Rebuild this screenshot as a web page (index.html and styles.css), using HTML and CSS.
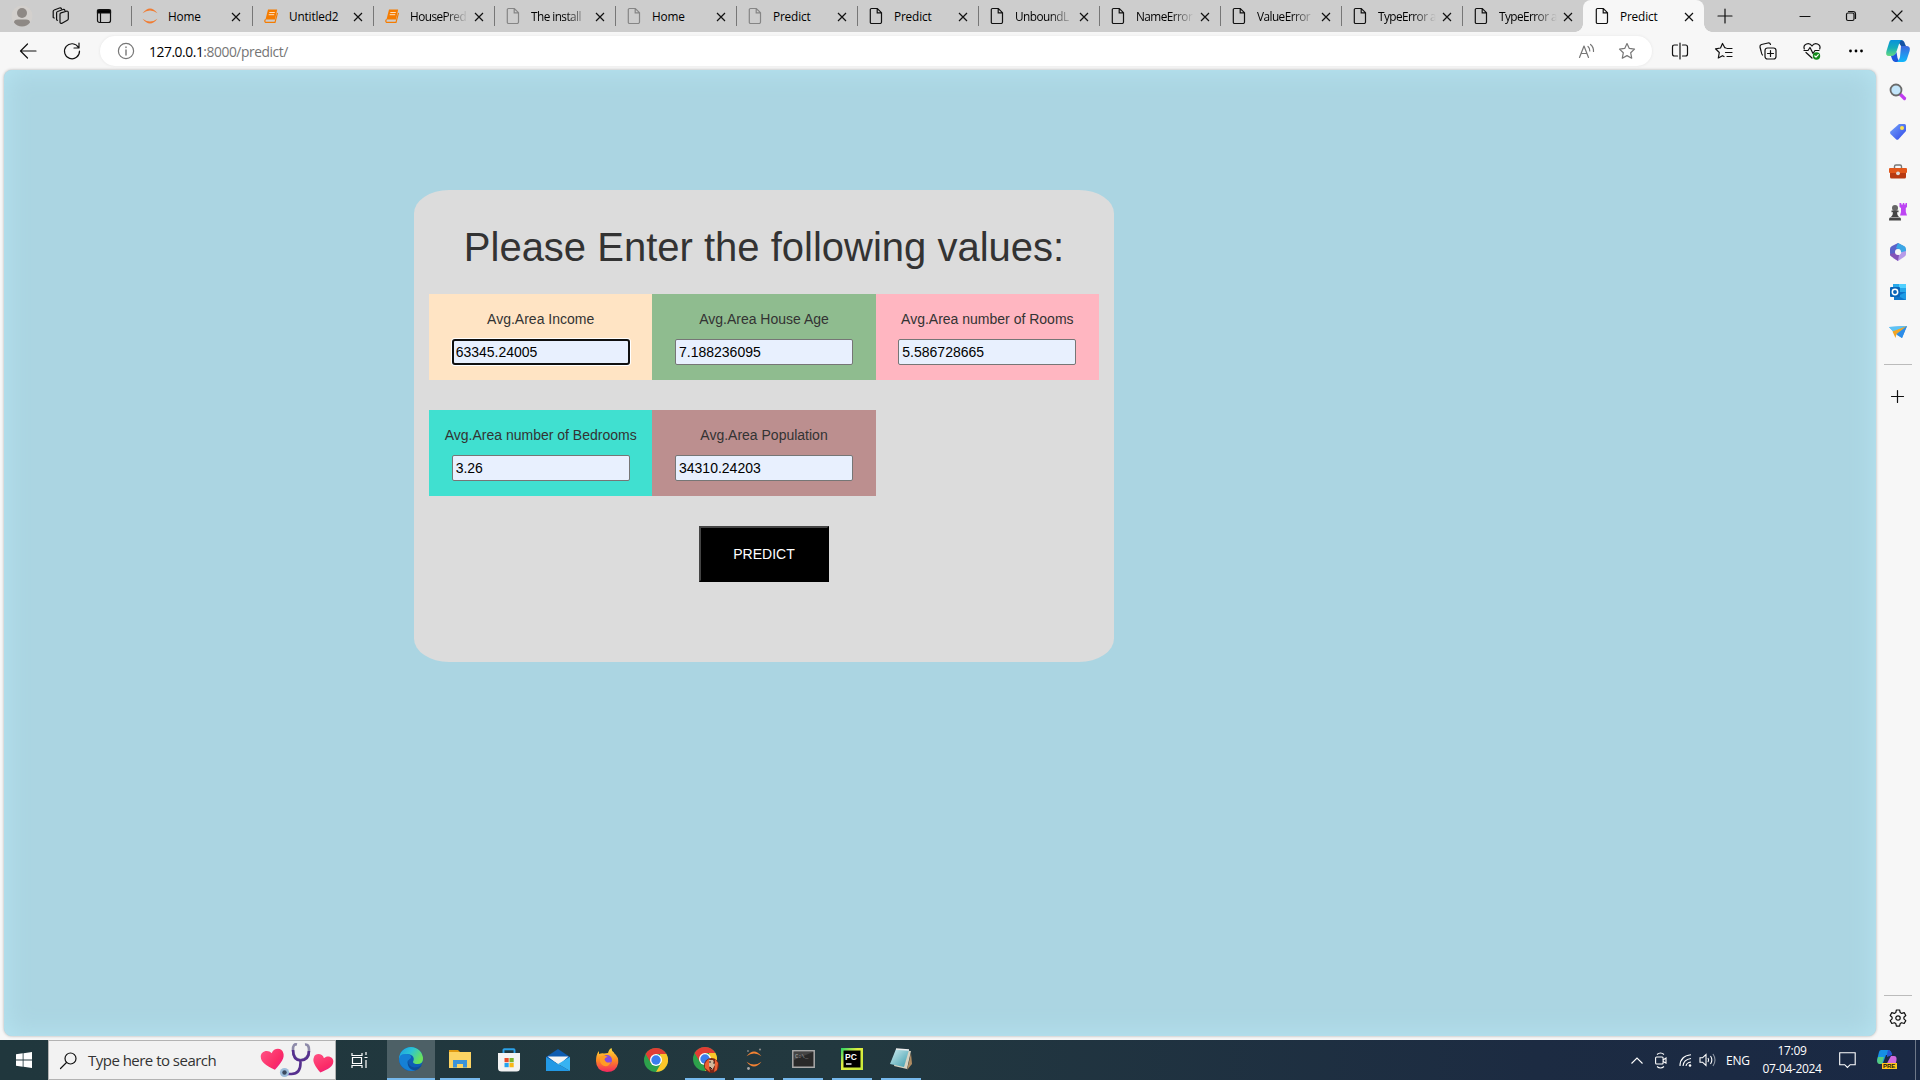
FILE: index.html
```html
<!DOCTYPE html>
<html lang="en">
<head>
<meta charset="utf-8">
<title>Predict</title>
<link rel="stylesheet" href="styles.css">
</head>
<body>
<svg class="defs" width="0" height="0" aria-hidden="true">
  <defs>
    <symbol id="doc" viewBox="0 0 14 18"><path d="M2.5 1.5h5.800l4.200 4.200v9.300a1.500 1.500 0 0 1-1.500 1.500H2.500A1.200 1.200 0 0 1 1.300 15.300V2.700A1.200 1.200 0 0 1 2.500 1.500zM8.200 1.500V5.800h4.300"/></symbol>
    <symbol id="x" viewBox="0 0 10 10"><path d="M1 1l8 8M9 1L1 9"/></symbol>
    <symbol id="book" viewBox="0 0 14 14"><path d="M4 .5h9.200L11 10.500H1.500z" fill="#f57c00"/><path d="M1.600 10.300Q0 12 1.500 13.300H11l2.500-9.500" fill="none" stroke="#f57c00" stroke-width="1.200"/><path d="M5.300 3.500h5.500M4.700 5.700h5.500" stroke="#ffe0c0" stroke-width="1"/></symbol>
    <symbol id="jup" viewBox="0 0 16 18"><path d="M.5 6.200Q8-3.400 15.500 6.200Q8 .600.5 6.200zM.5 11.800Q8 21.400 15.500 11.800Q8 17.400.5 11.800z"/></symbol>
    <symbol id="chrome" viewBox="0 0 24 24"><circle cx="12" cy="12" r="12" fill="#2da14b"/><path d="M1.600 6A12 12 0 0 1 22.400 6H12L7 15z" fill="#e13d34"/><path d="M22.400 6A12 12 0 0 1 12 24l5.200-9L16 6z" fill="#fcc629"/><circle cx="12" cy="12" r="6" fill="#fff"/><circle cx="12" cy="12" r="4.700" fill="#3b7ded"/></symbol>
    <symbol id="heart" viewBox="0 0 24 22"><path d="M12 21C4 15 0 11 .5 6 1 0 9-1 12 4 15-1 23 0 23.500 6 24 11 20 15 12 21z"/></symbol>
    <linearGradient id="gp" x1="0" y1="0" x2="1" y2="1"><stop offset="0" stop-color="#ff5285"/><stop offset=".6" stop-color="#fb2d67"/><stop offset="1" stop-color="#e9168c"/></linearGradient>
    <linearGradient id="gc1" x1="0" y1="0" x2="0" y2="1"><stop offset="0" stop-color="#0792dc"/><stop offset=".5" stop-color="#16aeb9"/><stop offset="1" stop-color="#66da80"/></linearGradient>
    <linearGradient id="gc2" x1="0" y1="0" x2="0" y2="1"><stop offset="0" stop-color="#3c67dd"/><stop offset="1" stop-color="#10b8fb"/></linearGradient>
    <linearGradient id="ge" x1="0" y1="0" x2="1" y2=".5"><stop offset="0" stop-color="#1b9de2"/><stop offset=".5" stop-color="#2cc3d5"/><stop offset="1" stop-color="#6be25b"/></linearGradient>
    <linearGradient id="gt" x1="0" y1="0" x2="1" y2="1"><stop offset="0" stop-color="#76a5fb"/><stop offset="1" stop-color="#3047e8"/></linearGradient>
    <linearGradient id="gf" x1="0" y1="0" x2="0" y2="1"><stop offset="0" stop-color="#ffdc3e"/><stop offset=".5" stop-color="#ff8b22"/><stop offset="1" stop-color="#f3265f"/></linearGradient>
    <linearGradient id="gy" x1="0" y1="0" x2="1" y2="1"><stop offset="0" stop-color="#25d366"/><stop offset=".4" stop-color="#e1ef40"/><stop offset="1" stop-color="#c5e838"/></linearGradient>
    <linearGradient id="gn" x1="0" y1="0" x2="1" y2="1"><stop offset="0" stop-color="#d0eef2"/><stop offset="1" stop-color="#3d9bab"/></linearGradient>
  </defs>
</svg>

<header class="tabbar">
  <div class="tabtools">
    <svg class="avatar" width="22" height="22" viewBox="0 0 22 22"><circle cx="11" cy="11" r="10.500" fill="#d3d0cd"/><circle cx="11" cy="8" r="5" fill="#8e8985"/><path d="M3 17.500q0-3 4-3h8q4 0 4 3Q16 21.500 11 21.500T3 17.500z" fill="#8e8985"/></svg>
    <svg class="line workspaces" width="18" height="18" viewBox="0 0 18 18"><path d="M8 7.200q0-1 1-1.300L14.500 4.200q1.800-.300 1.800 1.300v6.300q0 1-1 1.400L10 16.300q-1.700.4-2-1zM5.500 13.300 4.600 13V5.800q0-1 1-1.300L11 2.500q1.500-.300 2 1M2.200 11 1.200 10.500V4.300q0-1 1-1.300L7.500 1q1.500-.300 2 .8"/></svg>
    <svg class="line" width="16" height="16" viewBox="0 0 16 16"><rect x="1.500" y="1.500" width="13" height="13" rx="2"/><path d="M1.500 2h13v3h-13z" fill="#000"/><path d="M4.500 5v9.500"/></svg>
  </div>
  <nav class="tabs">
    <div class="tab"><svg class="fav jup" width="16" height="18"><use href="#jup"/></svg><span>Home</span><svg class="close"><use href="#x"/></svg></div>
    <div class="tab"><svg class="fav" width="14" height="14"><use href="#book"/></svg><span>Untitled2</span><svg class="close"><use href="#x"/></svg></div>
    <div class="tab"><svg class="fav" width="14" height="14"><use href="#book"/></svg><span class="fade">HousePred</span><svg class="close"><use href="#x"/></svg></div>
    <div class="tab"><svg class="fav doc dim"><use href="#doc"/></svg><span class="fade">The install</span><svg class="close"><use href="#x"/></svg></div>
    <div class="tab"><svg class="fav doc dim"><use href="#doc"/></svg><span>Home</span><svg class="close"><use href="#x"/></svg></div>
    <div class="tab"><svg class="fav doc dim"><use href="#doc"/></svg><span>Predict</span><svg class="close"><use href="#x"/></svg></div>
    <div class="tab"><svg class="fav doc"><use href="#doc"/></svg><span>Predict</span><svg class="close"><use href="#x"/></svg></div>
    <div class="tab"><svg class="fav doc"><use href="#doc"/></svg><span class="fade">UnboundL</span><svg class="close"><use href="#x"/></svg></div>
    <div class="tab"><svg class="fav doc"><use href="#doc"/></svg><span class="fade">NameError</span><svg class="close"><use href="#x"/></svg></div>
    <div class="tab"><svg class="fav doc"><use href="#doc"/></svg><span class="fade">ValueError</span><svg class="close"><use href="#x"/></svg></div>
    <div class="tab"><svg class="fav doc"><use href="#doc"/></svg><span class="fade">TypeError a</span><svg class="close"><use href="#x"/></svg></div>
    <div class="tab"><svg class="fav doc"><use href="#doc"/></svg><span class="fade">TypeError a</span><svg class="close"><use href="#x"/></svg></div>
    <div class="tab active"><svg class="fav doc"><use href="#doc"/></svg><span>Predict</span><svg class="close"><use href="#x"/></svg></div>
  </nav>
  <svg class="line newtab" width="14" height="14" viewBox="0 0 14 14"><path d="M7 0v14M0 7h14"/></svg>
  <div class="winctl">
    <svg class="line" width="12" height="12" viewBox="0 0 12 12"><path d="M1 6.500h10"/></svg>
    <svg class="line" width="12" height="12" viewBox="0 0 12 12"><rect x="1.500" y="3" width="7.500" height="7.500" rx="1.500"/><path d="M3.500 1.500h4.500q2.500 0 2.500 2.500v4.500"/></svg>
    <svg class="line" width="12" height="12" viewBox="0 0 12 12"><path d="M1 1l10 10M11 1L1 11"/></svg>
  </div>
</header>

<div class="toolbar">
  <div class="navbtns">
    <svg class="line" width="18" height="16" viewBox="0 0 18 16"><path d="M17 8H1.500M8.500 1 1.500 8l7 7"/></svg>
    <svg class="line" width="18" height="18" viewBox="0 0 18 18"><path d="M15.500 5.500A7.500 7.500 0 1 0 16.500 9M16 1v5h-5"/></svg>
  </div>
  <div class="address">
    <svg class="line gray" width="18" height="18" viewBox="0 0 18 18"><circle cx="9" cy="9" r="7.600"/><path d="M9 8v5M9 5v.5" stroke-width="1.400"/></svg>
    <p class="url"><b>127.0.0.1</b>:8000/predict/</p>
    <svg class="line gray" width="18" height="16" viewBox="0 0 18 16"><path d="M1.500 14.500 6 3l4.500 11.500M3.200 10.500h5.600M10 3.500q2 1.800 1.800 4.500M12.500 1.500q3.300 2.700 3 7"/></svg>
    <svg class="line gray" width="18" height="18" viewBox="0 0 18 18"><path d="M9 1.500l2.300 4.900 5.200.700-3.800 3.700 1 5.400L9 13.600l-4.700 2.600 1-5.400L1.500 7.100l5.200-.700z"/></svg>
  </div>
  <div class="actions">
    <svg class="line" width="18" height="18" viewBox="0 0 18 18"><path d="M9 1v16M6.500 3H3.500Q1.500 3 1.500 5v7q0 2 2 2h3M11.500 3h3q2 0 2 2v7q0 2-2 2h-3"/></svg>
    <svg class="line" width="18" height="18" viewBox="0 0 18 18"><path d="M11 6 9.800 5.700 7.500 1.500 5.500 6l-5 .8 3.800 3.700-1 5.500 4.200-2.300 1.500.8M12 6.500h5M10.500 10.500H17M12 14.500h5"/></svg>
    <svg class="line" width="18" height="18" viewBox="0 0 18 18"><rect x="6" y="6" width="11" height="11" rx="2.500"/><path d="M11.500 8.500v6M8.500 11.500h6M3.500 13Q2.700 12.500 2 9L1 5q-.300-2 1.500-2.500L9 1q2-.300 2.500 1.500"/></svg>
    <svg class="line" width="18" height="18" viewBox="0 0 18 18"><path d="M9 16 3 10.500M1.300 7Q0 3.500 3.500 2 7 .800 9 4q2-3.200 5.500-2 3.500 1.500 2.200 5M1 8.500h4l2-3 3 6 2-3h4"/><circle cx="13.500" cy="14" r="3.700" fill="#128a1b" stroke="none"/><path d="M11.800 14l1.200 1.200 2.300-2.500" stroke="#fff"/></svg>
    <svg width="18" height="18" viewBox="0 0 18 18"><circle cx="3.500" cy="9" r="1.400"/><circle cx="9" cy="9" r="1.400"/><circle cx="14.500" cy="9" r="1.400"/></svg>
  </div>
  <svg class="copilot" width="24" height="24" viewBox="0 0 24 24"><path d="M11 1h4q3 0 4 4l1 2h-5z" fill="#1453a4"/><path d="M5 1h11q-2 .500-3 4L10 14q-1 3-4 3H3Q-1 17 .5 12L3 4Q3.700 1 5 1z" fill="url(#gc1)"/><path d="M5 17q4 0 5.500-4l1 6 2 4H9Q7 23 6 20z" fill="#2057db"/><path d="M15 7h5q5 0 3.600 5L21 20q-1 3-4 3h-6q2-1 3-5z" fill="url(#gc2)"/></svg>
</div>

<div class="workspace">
  <main class="page">
    <section class="card">
      <h1>Please Enter the following values:</h1>
      <form class="fields">
        <label class="field income">Avg.Area Income<input class="focused" type="text" value="63345.24005"></label>
        <label class="field age">Avg.Area House Age<input type="text" value="7.188236095"></label>
        <label class="field rooms">Avg.Area number of Rooms<input type="text" value="5.586728665"></label>
        <label class="field bedrooms">Avg.Area number of Bedrooms<input type="text" value="3.26"></label>
        <label class="field population">Avg.Area Population<input type="text" value="34310.24203"></label>
        <button class="predict" type="button">PREDICT</button>
      </form>
    </section>
  </main>
  <aside class="sidebar">
    <svg width="18" height="18" viewBox="0 0 18 18"><path d="M11.500 11.500l4 4" stroke="#c03bf0" stroke-width="3.200" stroke-linecap="round"/><circle cx="7" cy="7" r="5.500" fill="#c3e6fb" stroke="#6b6b6b" stroke-width="1.800"/></svg>
    <svg width="18" height="18" viewBox="0 0 18 18"><path d="M10 1h5.500Q17 1 17 2.500V8L9.500 16.300q-1.200 1-2.500 0L1.500 11q-1-1.200 0-2.400z" fill="url(#gt)"/><circle cx="13" cy="5" r="2" fill="#ffe14e"/></svg>
    <svg width="18" height="18" viewBox="0 0 18 18"><path d="M5.500 5V3.500Q5.500 2 7 2h4q1.500 0 1.500 1.500V5" fill="none" stroke="#777" stroke-width="1.400"/><rect x="0" y="5" width="18" height="5" rx="1" fill="#e2571b"/><path d="M1 10h16v4q0 1.500-1.500 1.500h-13Q1 15.500 1 14z" fill="#b83a12"/><circle cx="9" cy="10.300" r="1.900" fill="#ddd"/></svg>
    <svg width="18" height="18" viewBox="0 0 18 18"><path d="M10.500 0h1.800v1.500h1.500V0h1.500v1.500h1.200V0H18v4l-1.200 1v4l1.200 3.500h-7L12 9V5l-1.500-1z" fill="#bd45f3"/><circle cx="6" cy="5" r="3" fill="#666"/><path d="M2.500 7.500h7v1.700H8q0 3 2 4.800H2q2-1.800 2-4.800H2.500zM1 14.500h10q1 0 1 3H0q0-3 1-3z" fill="#444"/></svg>
    <svg width="18" height="18" viewBox="0 0 18 18"><path d="M9 0l7 4v5l-5-3-4 1v4l-5 2Q1 12 1 10V6q0-2 2-3z" fill="#5b62c9"/><path d="M9 0l6 3q2 1 2 3v5l-6-2V7L7 5z" fill="#3ba6e5"/><path d="M17 8v3q0 2-2 3l-6 4-5-3 6-3 3-3z" fill="#b69be8"/><path d="M1 11l5-1 4 2-1 6-6-4q-2-1-2-3z" fill="#8452b8"/><circle cx="9" cy="9" r="3" fill="#f7f7f7"/></svg>
    <svg width="18" height="18" viewBox="0 0 18 18"><path d="M4 1h13v8H4z" fill="#28a8ea"/><path d="M10 1h7v4h-7z" fill="#50d0ff"/><path d="M5 9h12v8H5z" fill="#0f75c9"/><path d="M17 9v8l-8-4z" fill="#1e9be5"/><rect x="1" y="4" width="10" height="10" rx="1" fill="#0864b8"/><circle cx="6" cy="9" r="2.700" fill="none" stroke="#fff" stroke-width="1.500"/></svg>
    <svg width="18" height="18" viewBox="0 0 18 18"><path d="M0 4l18-1-5 12-5-3z" fill="#3399ea"/><path d="M0 4l18-1L4.500 9z" fill="#5dc3f5"/><path d="M3.500 8.500 18 3 7.500 11l-1 4z" fill="#f3a524"/><path d="M18 3 8 11.500 13 15z" fill="#2d8ce8"/></svg>
    <hr>
    <svg class="line plus" width="13" height="13" viewBox="0 0 13 13"><path d="M6.500 .5v12M.5 6.500h12"/></svg>
    <hr class="low">
    <svg class="line" width="18" height="18" viewBox="0 0 18 18"><circle cx="9" cy="9" r="2.200"/><path d="M7.400 1h3.200l.600 2.500 1.500.900 2.500-.800 1.600 2.900-1.900 1.700v1.700l1.900 1.700-1.600 2.900-2.500-.800-1.500.900-.600 2.500H7.400l-.600-2.500-1.500-.900-2.500.800-1.600-2.900 1.900-1.700V8.200L1.200 6.500l1.600-2.900 2.500.800 1.500-.900z"/></svg>
  </aside>
</div>

<footer class="taskbar">
  <div class="start"><svg width="16" height="16" viewBox="0 0 16 16" fill="#fff"><path d="M0 2.200 6.700 1.300v6.300H0zM7.500 1.200 16 0v7.600H7.500zM0 8.400h6.700v6.300L0 13.800zM7.500 8.400H16V16l-8.500-1.200z"/></svg></div>
  <div class="search">
    <svg class="line" width="17" height="17" viewBox="0 0 17 17"><circle cx="10.500" cy="6.500" r="5.500"/><path d="M6.500 10.500.5 16.500"/></svg>
    <span>Type here to search</span>
    <svg class="deco" width="74" height="36" viewBox="0 0 74 36"><use href="#heart" width="24" height="22" fill="url(#gp)" transform="translate(1 7) rotate(-11 12 11)"/><use href="#heart" width="21" height="20" fill="url(#gp)" transform="translate(52 12) rotate(14 10 10)"/><path d="M37 2.500q-4-1-4 5 0 10 7.500 10.500Q49 17.500 49 8q0-6-4-5.500" fill="none" stroke="#8d8aa9" stroke-width="2.600"/><path d="M33 8q0 10 7.500 10.500Q49 18 49 9M40.500 18v3q0 11-9 11h-5" fill="none" stroke="#56308f" stroke-width="2.600"/><circle cx="24.500" cy="30.500" r="4.600" fill="#9dbddb"/><circle cx="24.500" cy="30.500" r="2.200" fill="#3b4a5f"/></svg>
  </div>
  <div class="taskview"><svg width="17" height="17" viewBox="0 0 17 17" fill="none" stroke="#fff" stroke-width="1.200"><path d="M1 1v2.500h10V1M1 16v-2.500h10V16M1.500 5.500h9v6h-9zM15 0v3M15 8v8M13.500 5.500h3"/></svg></div>
  <div class="apps">
    <div class="app current"><svg width="24" height="24" viewBox="0 0 24 24"><circle cx="12" cy="12" r="12" fill="#0e5cb5"/><path d="M0 12A12 12 0 0 1 24 12q0 5-5.500 5-4 0-4.500-2 2-4-1-6.500Q7 5 0 12z" fill="url(#ge)"/><path d="M0 12q.500-5 6-5 7 0 6 4-4 2-2.500 6 2 5 8 5.500Q12 25.500 6 22 0 18 0 12z" fill="#1580d5"/><path d="M9.300 13q-.500 7 6 7.500 4 0 7.500-2.500-2 4-6 5.200-6 0-7.500-4.200T9.300 13z" fill="#0d4c98"/></svg></div>
    <div class="app open"><svg width="22" height="18" viewBox="0 0 22 18"><path d="M0 0h9l2 2H0z" fill="#e09a11"/><path d="M0 2h22v16H0z" fill="#fbd363"/><path d="M4 17.500V10h14v7.500h-4V14H8v3.500z" fill="#3b93d9"/></svg></div>
    <div class="app"><svg width="24" height="24" viewBox="0 0 24 24"><path d="M6.500 6V2q0-.800.800-.8h9.400q.800 0 .800.800v4" fill="none" stroke="#2ba1e8" stroke-width="1.900"/><path d="M1 5h22v15q0 3.500-3.500 3.500h-15Q1 23.500 1 20z" fill="#f3f3f3"/><path d="M7.500 10h4.200v4.200H7.500z" fill="#e94b29"/><path d="M12.500 10h4.200v4.200h-4.200z" fill="#7cb52b"/><path d="M7.500 15h4.200v4.200H7.500z" fill="#24a3ee"/><path d="M12.500 15h4.200v4.200h-4.200z" fill="#f8b716"/></svg></div>
    <div class="app"><svg width="24" height="24" viewBox="0 0 24 24"><path d="M0 9 12 1l12 8v5H0z" fill="#0d5bb0"/><path d="M1.500 8.500h21L13 17z" fill="#f4f4f4"/><path d="M0 9l24 14H0z" fill="#2299e5"/><path d="M24 9v14L12 16z" fill="#37b3f2"/></svg></div>
    <div class="app"><svg width="24" height="24" viewBox="0 0 24 24"><path d="M1.500 8Q2 5 4 3v3q3-1 5-.500L13 5q1-4 3.500-5 0 3 2.500 4.500V5q5 4 4.200 10Q21.500 24 12 24 1 23 1 13q0-3 .5-5z" fill="url(#gf)"/><circle cx="12" cy="12" r="5" fill="#854be0"/><path d="M5 9q4-3 8 0-3 0-3.500 2.500Q11 16 16 14q-3 6-8 3.500Q4 15 5 9z" fill="#ff9b24"/></svg></div>
    <div class="app"><svg width="24" height="24"><use href="#chrome"/></svg></div>
    <div class="app open"><svg width="24" height="24" viewBox="0 0 24 24"><use href="#chrome" width="24" height="24"/><circle cx="18.500" cy="18.500" r="7.500" fill="#7a2718"/><path d="M12 21q-1-6 4-9l2 3-2 5 1 5zM22 12l3 4-1 7-3 2 1-6z" fill="#ee6032"/><path d="M16 13h4l2 5-3 5-3-4z" fill="#d3b79b"/><path d="M16 15h2M20 16h1.500M17 20l2 2" stroke="#222"/></svg></div>
    <div class="app open"><svg width="16" height="22" viewBox="0 0 16 22"><use href="#jup" y="2" width="16" height="18" fill="#f28233"/><circle cx="14" cy="1.500" r="1.100" fill="#888"/><circle cx="2" cy="3" r=".9" fill="#888"/><circle cx="2.500" cy="20.500" r="1.400" fill="#aaa"/></svg></div>
    <div class="app open"><svg width="23" height="18" viewBox="0 0 23 18"><path d="M.8.8h21.400v16.400H.8z" fill="#292929" stroke="#a9a9a9" stroke-width="1.500"/><path d="M2 2h19L2 10z" fill="#444"/><text x="3" y="8" font-family="Liberation Mono" font-size="5.500" fill="#aaa">C:\_</text></svg></div>
    <div class="app open"><svg width="22" height="22" viewBox="0 0 22 22"><path d="M0 0h22v22H0z" fill="url(#gy)"/><path d="M2.500 2.500h17v17h-17z" fill="#000"/><text x="4" y="11.500" font-family="Liberation Sans" font-weight="700" font-size="8.500" fill="#fff">PC</text><path d="M5 16h5.500" stroke="#fff" stroke-width="1.400"/></svg></div>
    <div class="app open"><svg width="22" height="22" viewBox="0 0 22 22"><path d="M8 2l13 1-4 18-13-3z" fill="#d8d3c2"/><path d="M6 1l13 1-5 17L0 16z" fill="url(#gn)"/><path d="M21 5l1 11-5 6z" fill="#b08c62"/><path d="M6 1l13 1" stroke="#eee" stroke-width="1.500"/></svg></div>
  </div>
  <div class="tray">
    <svg width="12" height="7" viewBox="0 0 12 7"><path d="M.5 6.500 6 1l5.500 5.500"/></svg>
    <svg width="12" height="17" viewBox="0 0 12 17"><rect x=".6" y="5" width="7.500" height="7" rx="1"/><path d="M8 8l3-2v5L8 9.500M2 2.500Q5.500-.500 9 2.500M2 14.500q3.500 3 7 0"/></svg>
    <svg class="wifi" width="13" height="13" viewBox="0 0 13 13"><path d="M1 12Q1 2 12 .8M4 12q.500-6.500 8-7.500M7 12q.500-3.500 5-4"/><circle cx="11" cy="11.500" r="1.300" fill="#fff" stroke="none"/></svg>
    <svg class="volume" width="17" height="14" viewBox="0 0 17 14"><path d="M1 4.800h2.500L7 1.500v11L3.500 9.200H1zM9 5q1.300 2 0 4M11.500 3q2.700 4 0 8"/><path d="M14 1q4 6 0 12" opacity=".5"/></svg>
    <span class="lang">ENG</span>
    <div class="clock"><span>17:09</span><span>07-04-2024</span></div>
    <svg class="notes" width="17" height="16" viewBox="0 0 17 16"><path d="M.7.700h15.500v12h-5L8.400 15.500 5.700 12.700h-5z"/></svg>
    <svg class="pre" width="20" height="20" viewBox="0 0 20 20"><path d="M4 0h7q3 0 4 5H9L6 13H2Q-1 12 .5 8L2 2Q2.500 0 4 0z" fill="#168fe6"/><path d="M1 7h6l-2 7H2Q-1 13 1 7z" fill="#54cb81"/><path d="M11 0q3 0 4 5l-5 2V4z" fill="#2755d4"/><path d="M14 6h3q3 0 2.500 4l-1 5H9z" fill="#cf69dc"/><path d="M5 13h15v6H5z" fill="#ffc51b"/><text x="6" y="18.300" font-family="Liberation Sans" font-weight="700" font-size="6" fill="#111">PRE</text></svg>
    <i class="peek"></i>
  </div>
</footer>
</body>
</html>
```
FILE: styles.css
```css
* { box-sizing: border-box; }
body { margin: 0; width: 1920px; height: 1080px; overflow: hidden; display: flex; flex-direction: column; background: #f7f7f7; font-family: "Open Sans", "Noto Sans", sans-serif; color: #000; }
svg { flex: none; display: block; overflow: visible; }
.defs { position: absolute; }
.line { fill: none; stroke: #111; stroke-width: 1.2; stroke-linecap: round; stroke-linejoin: round; }
.gray { stroke: #777; }

.tabbar { display: flex; align-items: center; height: 32px; background: #cdcdcd; }
.tabtools { width: 131px; display: flex; align-items: center; padding-left: 11px; }
.workspaces { margin: 0 26px 0 19px; }
.tabs { display: flex; height: 32px; }
.tab { position: relative; width: 121px; height: 32px; display: flex; align-items: center; padding-left: 12px; font-size: 11.8px; letter-spacing: -.15px; white-space: nowrap; }
.tab::before { content: ""; position: absolute; left: 0; top: 6px; width: 1px; height: 20px; background: #777; }
.tab span { width: 58px; margin-left: 11px; line-height: 20px; }
.tab .fade { letter-spacing: -.55px; mask-image: linear-gradient(90deg, #000 60%, transparent 100%); }
.fav { margin-left: 0; }
.jup { fill: #f07c32; margin: 0 -2px 0 -1px; }
.doc { width: 14px; height: 18px; fill: none; stroke: #111; stroke-width: 1.2; }
.jup + span { padding-left: 1px; }
.dim { stroke: #858585; }
.close { width: 10px; height: 10px; margin-left: 6px; margin-top: 1px; fill: none; stroke: #111; stroke-width: 1.2; }
.tab.active { background: #f7f7f7; border-radius: 8px 8px 0 0; }
.tab.active::before { left: -8px; top: 24px; width: 8px; height: 8px; background: radial-gradient(circle at 0 0, transparent 7.500px, #f7f7f7 8px); }
.tab.active::after { content: ""; position: absolute; right: -8px; top: 24px; width: 8px; height: 8px; background: radial-gradient(circle at 100% 0, transparent 7.500px, #f7f7f7 8px); }
.newtab { margin-left: 14px; }
.winctl { margin-left: auto; display: flex; gap: 34px; padding-right: 17px; }

.toolbar { display: flex; align-items: center; height: 38px; background: #f7f7f7; }
.navbtns { width: 100px; display: flex; align-items: center; gap: 26px; padding-left: 19px; }
.address { width: 1552px; height: 30px; display: flex; align-items: center; padding: 0 16px 0 17px; border-radius: 15px; background: #fff; box-shadow: 0 0 3px #e4e4e4; }
.url { flex: 1; margin: 0 0 0 14px; font-size: 13.8px; letter-spacing: -.43px; color: #757575; }
.url b { font-weight: 400; color: #000; }
.address .url + svg { margin-right: 22px; }
.actions { display: flex; gap: 26px; margin-left: 19px; }
.copilot { margin-left: 21px; }

.workspace { display: flex; height: 970px; background: #f7f7f7; }
.page { width: 1872px; height: 966px; margin-left: 4px; padding: 120px 0 0 410px; border-radius: 8px; background: #abd5e2; box-shadow: inset 0 0 26px #b7e5f2, 0 0 3px #aaa; }
.card { width: 700px; height: 472px; padding: 35px 15px 0; border-radius: 5%; background: #dcdcdc; font-family: "Liberation Sans", Arial, sans-serif; color: #333; text-align: center; }
.card h1 { margin: 0 0 25px; font-size: 40px; line-height: 44px; font-weight: 400; white-space: nowrap; }
.fields { display: grid; grid-template-columns: repeat(3, 1fr); row-gap: 30px; font-size: 14px; }
.field { height: 86px; padding-top: 15px; line-height: 20px; display: flex; flex-direction: column; align-items: center; white-space: nowrap; }
.field input { width: 178px; height: 26px; margin-top: 10px; padding: 1px 3px; border: 1px solid #767676; border-radius: 2px; background: #e8f0fe; font: 14px "Liberation Sans", Arial, sans-serif; color: #000; outline: none; }
.field .focused { border: 2px solid #101010; padding: 0 2px; border-radius: 3px; box-shadow: 0 0 0 1px #fff; }
.income { background: #ffe4c4; }
.age { background: #8fbc8f; }
.rooms { background: #ffb6c1; }
.bedrooms { background: #40e0d0; }
.population { background: #bc8f8f; }
.predict { grid-column: 2; justify-self: center; width: 130px; height: 56px; border: 2px solid; border-color: #444 #000 #000 #444; background: #000; color: #fff; font: 14px "Liberation Sans", Arial, sans-serif; }

.sidebar { width: 44px; display: flex; flex-direction: column; align-items: center; gap: 22px; padding: 13px 1px 0 0; }
.sidebar hr { width: 28px; height: 1px; margin: 1px 0 3px; border: 0; background: #bbb; }
.sidebar .low { margin-top: auto; margin-bottom: -9px; }
.sidebar svg:last-child { margin-bottom: 13px; }

.taskbar { display: flex; height: 40px; background: linear-gradient(90deg, #20373d 0, #22383f 45%, #1c2b42 80%, #1a2944 100%); color: #fff; }
.start { width: 48px; display: grid; place-items: center; }
.search { width: 288px; display: flex; align-items: center; padding: 0 1px 0 11px; border: 1px solid #b3b3b3; background: #f2f2f2; color: #333; font-size: 15px; }
.search span { margin-left: 11px; flex: 1; white-space: nowrap; letter-spacing: -.52px; }
.taskview { width: 51px; padding-right: 4px; display: grid; place-items: center; }
.apps { display: flex; gap: 9px; }
.app { width: 40px; height: 40px; display: grid; place-items: center; }
.app.current { width: 48px; margin-right: -4px; background: #4d6066; border-bottom: 2px solid #76b9ed; }
.app.open { border-bottom: 2px solid #76b9ed; }
.tray { margin-left: auto; display: flex; align-items: center; font-size: 12px; }
.tray svg { margin-right: 12px; fill: none; stroke: #fff; stroke-width: 1.1; }
.tray .wifi { margin-right: 7px; }
.tray .volume { margin-right: 10px; }
.tray .pre { stroke: none; margin-right: 18px; }
.lang { width: 25px; letter-spacing: -.2px; margin-right: 11px; }
.clock { width: 60px; display: flex; flex-direction: column; align-items: center; line-height: 18px; letter-spacing: -.35px; white-space: nowrap; }
.tray .notes { margin: 0 21px 0 17px; }
.peek { width: 1px; height: 40px; margin-right: 4px; background: #6e7888; }
```
